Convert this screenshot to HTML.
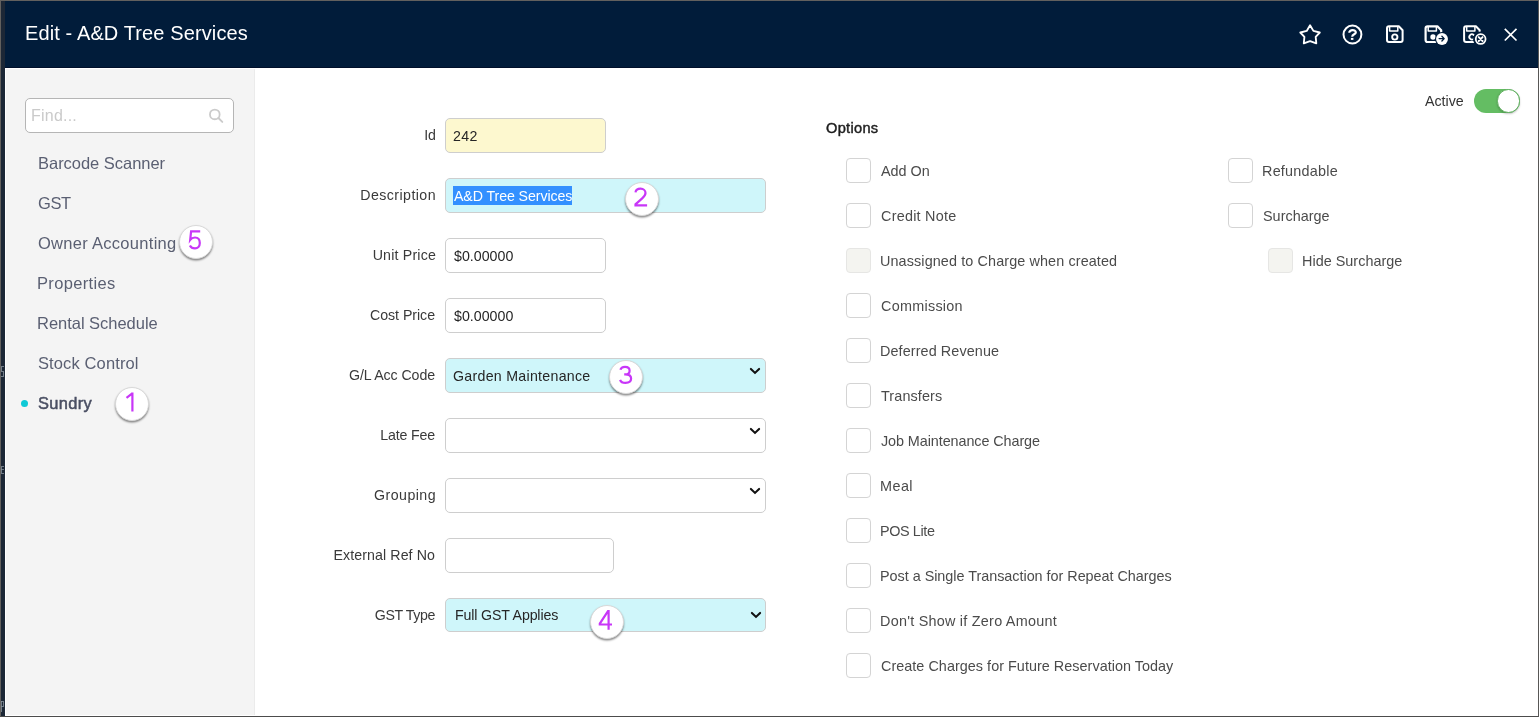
<!DOCTYPE html>
<html><head><meta charset="utf-8">
<style>
*{margin:0;padding:0;box-sizing:border-box}
html,body{width:1539px;height:717px;overflow:hidden;background:#5f5d5b;font-family:"Liberation Sans",sans-serif}
.a,.t,.badge,svg{position:absolute}
.t{white-space:nowrap;will-change:transform}
.badge{border-radius:50%;background:#fff;border:1px solid #d9d9d9;box-shadow:0 1.5px 2px rgba(0,0,0,.45)}
</style></head>
<body>
<div class="a" style="left:0px;top:0px;width:1539px;height:717px;background:#62605e"></div>
<div class="a" style="left:1px;top:1px;width:4px;height:715px;background:#1c2736"></div>
<div class="a" style="left:5px;top:1px;width:1533px;height:715px;background:#fff"></div>
<div class="a" style="left:0px;top:716px;width:1539px;height:1px;background:#4c4c4c"></div>
<div class="a" style="left:1538px;top:1px;width:1px;height:716px;background:#585756"></div>
<div class="a" style="left:1px;top:366px;width:3px;height:1px;background:#8d99a3;opacity:.75"></div>
<div class="a" style="left:1px;top:367px;width:1px;height:4px;background:#8d99a3;opacity:.75"></div>
<div class="a" style="left:1px;top:371px;width:3px;height:1px;background:#8d99a3;opacity:.75"></div>
<div class="a" style="left:3px;top:372px;width:1px;height:4px;background:#8d99a3;opacity:.75"></div>
<div class="a" style="left:1px;top:376px;width:3px;height:1px;background:#8d99a3;opacity:.75"></div>
<div class="a" style="left:1px;top:466px;width:3px;height:1px;background:#8d99a3;opacity:.75"></div>
<div class="a" style="left:1px;top:467px;width:1px;height:6px;background:#8d99a3;opacity:.75"></div>
<div class="a" style="left:1px;top:469px;width:3px;height:1px;background:#8d99a3;opacity:.75"></div>
<div class="a" style="left:1px;top:473px;width:3px;height:1px;background:#8d99a3;opacity:.75"></div>
<div class="a" style="left:1px;top:701px;width:1px;height:11px;background:#8d99a3;opacity:.75"></div>
<div class="a" style="left:1px;top:701px;width:3px;height:1px;background:#8d99a3;opacity:.75"></div>
<div class="a" style="left:3px;top:702px;width:1px;height:4px;background:#8d99a3;opacity:.75"></div>
<div class="a" style="left:1px;top:706px;width:3px;height:1px;background:#8d99a3;opacity:.75"></div>
<div class="a" style="left:5px;top:1px;width:1533px;height:66px;background:#011c3a"></div>
<div class="a" style="left:5px;top:67px;width:1533px;height:1px;background:#000f2a"></div>
<div class="t" style="left:25.40px;top:19.67px;font-size:20.000px;line-height:26px;color:#fff;letter-spacing:0.117px;">Edit - A&amp;D Tree Services</div>
<div class="a" style="left:6px;top:69px;width:248px;height:646px;background:#f4f4f4"></div>
<div class="a" style="left:254px;top:69px;width:1px;height:646px;background:#ebebeb"></div>
<div class="a" style="left:25px;top:98px;width:209px;height:35px;background:#fff;border:1px solid #b5b5b5;border-radius:5px"></div>
<div class="t" style="left:30.72px;top:104.95px;font-size:16.000px;line-height:21px;color:#cacaca;letter-spacing:0.220px;">Find...</div>
<svg style="left:205px;top:105px" width="22" height="22" viewBox="0 0 22 22"><circle cx="9.8" cy="9.4" r="4.85" fill="none" stroke="#cbcbcb" stroke-width="1.8"/><line x1="13.4" y1="13" x2="17.3" y2="16.9" stroke="#cbcbcb" stroke-width="1.9" stroke-linecap="round"/></svg>
<div class="t" style="left:37.68px;top:153.28px;font-size:16.500px;line-height:21px;color:#5a5f72;letter-spacing:-0.028px;">Barcode Scanner</div>
<div class="t" style="left:37.97px;top:193.28px;font-size:16.500px;line-height:21px;color:#5a5f72;letter-spacing:-0.450px;">GST</div>
<div class="t" style="left:37.86px;top:233.28px;font-size:16.500px;line-height:21px;color:#5a5f72;letter-spacing:0.288px;">Owner Accounting</div>
<div class="t" style="left:37.08px;top:273.28px;font-size:16.500px;line-height:21px;color:#5a5f72;letter-spacing:0.340px;">Properties</div>
<div class="t" style="left:37.08px;top:313.28px;font-size:16.500px;line-height:21px;color:#5a5f72;letter-spacing:-0.026px;">Rental Schedule</div>
<div class="t" style="left:37.66px;top:353.28px;font-size:16.500px;line-height:21px;color:#5a5f72;letter-spacing:0.118px;">Stock Control</div>
<div class="t" style="left:38.06px;top:393.31px;font-size:16.400px;line-height:21px;color:#4a4f63;-webkit-text-stroke:0.5px #4a4f63;letter-spacing:0.35px;">Sundry</div>
<div class="a" style="left:20.5px;top:399.5px;width:7px;height:7px;background:#0ec9d6;border-radius:50%"></div>
<div class="badge" style="left:178.5px;top:224.6px;width:34px;height:34px;"></div>
<div class="badge" style="left:114.5px;top:386.6px;width:34px;height:34px;"></div>
<div class="t" style="left:35.61px;width:400px;text-align:right;top:125.98px;font-size:14.200px;line-height:18px;color:#3a3a3a;">Id</div>
<div class="a" style="left:445px;top:118px;width:161px;height:35px;background:#fdf8cf;border:1px solid #cecece;border-radius:5px"></div>
<div class="t" style="left:453.09px;top:126.88px;font-size:14.200px;line-height:18px;color:#262626;letter-spacing:0.389px;">242</div>
<div class="t" style="left:36.09px;width:400px;text-align:right;top:185.98px;font-size:14.200px;line-height:18px;color:#3a3a3a;letter-spacing:0.436px;">Description</div>
<div class="a" style="left:445px;top:178px;width:321px;height:35px;background:#cff6fa;border:1px solid #cecece;border-radius:5px"></div>
<div class="a" style="left:453px;top:186px;width:119px;height:19px;background:#3390ff"></div>
<div class="t" style="left:453.50px;top:187.28px;font-size:14.200px;line-height:18px;color:#fff;letter-spacing:-0.093px;">A&amp;D Tree Services</div>
<div class="t" style="left:35.52px;width:400px;text-align:right;top:245.98px;font-size:14.200px;line-height:18px;color:#3a3a3a;letter-spacing:0.183px;">Unit Price</div>
<div class="a" style="left:445px;top:238px;width:161px;height:35px;background:#fff;border:1px solid #cecece;border-radius:5px"></div>
<div class="t" style="left:453.66px;top:246.98px;font-size:14.200px;line-height:18px;color:#262626;letter-spacing:0.018px;">$0.00000</div>
<div class="t" style="left:35.33px;width:400px;text-align:right;top:305.98px;font-size:14.200px;line-height:18px;color:#3a3a3a;letter-spacing:-0.046px;">Cost Price</div>
<div class="a" style="left:445px;top:298px;width:161px;height:35px;background:#fff;border:1px solid #cecece;border-radius:5px"></div>
<div class="t" style="left:453.66px;top:306.98px;font-size:14.200px;line-height:18px;color:#262626;letter-spacing:0.018px;">$0.00000</div>
<div class="t" style="left:35.29px;width:400px;text-align:right;top:365.98px;font-size:14.200px;line-height:18px;color:#3a3a3a;letter-spacing:-0.091px;">G/L Acc Code</div>
<div class="a" style="left:445px;top:358px;width:321px;height:35px;background:#cff6fa;border:1px solid #cecece;border-radius:5px"></div>
<div class="t" style="left:453.09px;top:367.38px;font-size:14.200px;line-height:18px;color:#262626;letter-spacing:0.278px;">Garden Maintenance</div>
<svg style="left:748px;top:367px" width="14" height="9" viewBox="0 0 14 9"><polyline points="2.9,1.9 7,5.9 11.1,1.9" fill="none" stroke="#111" stroke-width="2.1" stroke-linecap="round" stroke-linejoin="miter"/></svg>
<div class="t" style="left:35.21px;width:400px;text-align:right;top:425.98px;font-size:14.200px;line-height:18px;color:#3a3a3a;letter-spacing:-0.163px;">Late Fee</div>
<div class="a" style="left:445px;top:418px;width:321px;height:35px;background:#fff;border:1px solid #cecece;border-radius:5px"></div>
<svg style="left:748px;top:427px" width="14" height="9" viewBox="0 0 14 9"><polyline points="2.9,1.9 7,5.9 11.1,1.9" fill="none" stroke="#111" stroke-width="2.1" stroke-linecap="round" stroke-linejoin="miter"/></svg>
<div class="t" style="left:36.05px;width:400px;text-align:right;top:485.98px;font-size:14.200px;line-height:18px;color:#3a3a3a;letter-spacing:0.443px;">Grouping</div>
<div class="a" style="left:445px;top:478px;width:321px;height:35px;background:#fff;border:1px solid #cecece;border-radius:5px"></div>
<svg style="left:748px;top:487px" width="14" height="9" viewBox="0 0 14 9"><polyline points="2.9,1.9 7,5.9 11.1,1.9" fill="none" stroke="#111" stroke-width="2.1" stroke-linecap="round" stroke-linejoin="miter"/></svg>
<div class="t" style="left:35.34px;width:400px;text-align:right;top:545.98px;font-size:14.200px;line-height:18px;color:#3a3a3a;letter-spacing:0.089px;">External Ref No</div>
<div class="a" style="left:445px;top:538px;width:169px;height:35px;background:#fff;border:1px solid #cecece;border-radius:5px"></div>
<div class="t" style="left:34.95px;width:400px;text-align:right;top:605.98px;font-size:14.200px;line-height:18px;color:#3a3a3a;letter-spacing:-0.393px;">GST Type</div>
<div class="a" style="left:445px;top:598px;width:321px;height:34px;background:#cff6fa;border:1px solid #cecece;border-radius:5px"></div>
<div class="t" style="left:455.16px;top:605.68px;font-size:14.200px;line-height:18px;color:#262626;letter-spacing:-0.145px;">Full GST Applies</div>
<svg style="left:748.8px;top:611px" width="14" height="9" viewBox="0 0 14 9"><polyline points="2.9,1.9 7,5.9 11.1,1.9" fill="none" stroke="#111" stroke-width="2.1" stroke-linecap="round" stroke-linejoin="miter"/></svg>
<div class="badge" style="left:624.5px;top:181.6px;width:34px;height:34px;"></div>
<div class="badge" style="left:609.4px;top:359.6px;width:34px;height:34px;"></div>
<div class="badge" style="left:589.5px;top:604.6px;width:34px;height:34px;"></div>
<div class="t" style="left:825.84px;top:118.94px;font-size:14.600px;line-height:19px;color:#1e1e1e;-webkit-text-stroke:0.45px #1e1e1e;letter-spacing:0.3px;">Options</div>
<div class="a" style="left:846px;top:158px;width:25px;height:25px;background:#fff;border:1px solid #d4d4d4;border-radius:4px"></div>
<div class="t" style="left:881.40px;top:161.51px;font-size:14.400px;line-height:19px;color:#4b4b4b;letter-spacing:0.004px;">Add On</div>
<div class="a" style="left:846px;top:203px;width:25px;height:25px;background:#fff;border:1px solid #d4d4d4;border-radius:4px"></div>
<div class="t" style="left:880.68px;top:206.51px;font-size:14.400px;line-height:19px;color:#4b4b4b;letter-spacing:0.238px;">Credit Note</div>
<div class="a" style="left:846px;top:248px;width:25px;height:25px;background:#f4f4f0;border:1px solid #e6e6e4;border-radius:4px"></div>
<div class="t" style="left:880.32px;top:251.51px;font-size:14.400px;line-height:19px;color:#4b4b4b;letter-spacing:0.109px;">Unassigned to Charge when created</div>
<div class="a" style="left:846px;top:293px;width:25px;height:25px;background:#fff;border:1px solid #d4d4d4;border-radius:4px"></div>
<div class="t" style="left:880.68px;top:296.51px;font-size:14.400px;line-height:19px;color:#4b4b4b;letter-spacing:0.273px;">Commission</div>
<div class="a" style="left:846px;top:338px;width:25px;height:25px;background:#fff;border:1px solid #d4d4d4;border-radius:4px"></div>
<div class="t" style="left:880.25px;top:341.51px;font-size:14.400px;line-height:19px;color:#4b4b4b;letter-spacing:0.097px;">Deferred Revenue</div>
<div class="a" style="left:846px;top:383px;width:25px;height:25px;background:#fff;border:1px solid #d4d4d4;border-radius:4px"></div>
<div class="t" style="left:881.11px;top:386.51px;font-size:14.400px;line-height:19px;color:#4b4b4b;letter-spacing:0.116px;">Transfers</div>
<div class="a" style="left:846px;top:428px;width:25px;height:25px;background:#fff;border:1px solid #d4d4d4;border-radius:4px"></div>
<div class="t" style="left:881.18px;top:431.51px;font-size:14.400px;line-height:19px;color:#4b4b4b;letter-spacing:-0.084px;">Job Maintenance Charge</div>
<div class="a" style="left:846px;top:473px;width:25px;height:25px;background:#fff;border:1px solid #d4d4d4;border-radius:4px"></div>
<div class="t" style="left:880.25px;top:476.51px;font-size:14.400px;line-height:19px;color:#4b4b4b;letter-spacing:0.450px;">Meal</div>
<div class="a" style="left:846px;top:518px;width:25px;height:25px;background:#fff;border:1px solid #d4d4d4;border-radius:4px"></div>
<div class="t" style="left:880.25px;top:521.51px;font-size:14.400px;line-height:19px;color:#4b4b4b;letter-spacing:-0.386px;">POS Lite</div>
<div class="a" style="left:846px;top:563px;width:25px;height:25px;background:#fff;border:1px solid #d4d4d4;border-radius:4px"></div>
<div class="t" style="left:880.25px;top:566.51px;font-size:14.400px;line-height:19px;color:#4b4b4b;letter-spacing:-0.024px;">Post a Single Transaction for Repeat Charges</div>
<div class="a" style="left:846px;top:608px;width:25px;height:25px;background:#fff;border:1px solid #d4d4d4;border-radius:4px"></div>
<div class="t" style="left:880.25px;top:611.51px;font-size:14.400px;line-height:19px;color:#4b4b4b;letter-spacing:0.248px;">Don&#x27;t Show if Zero Amount</div>
<div class="a" style="left:846px;top:653px;width:25px;height:25px;background:#fff;border:1px solid #d4d4d4;border-radius:4px"></div>
<div class="t" style="left:880.68px;top:656.51px;font-size:14.400px;line-height:19px;color:#4b4b4b;letter-spacing:0.034px;">Create Charges for Future Reservation Today</div>
<div class="a" style="left:1228px;top:158px;width:25px;height:25px;background:#fff;border:1px solid #d4d4d4;border-radius:4px"></div>
<div class="t" style="left:1262.35px;top:161.51px;font-size:14.400px;line-height:19px;color:#4b4b4b;letter-spacing:0.238px;">Refundable</div>
<div class="a" style="left:1228px;top:203px;width:25px;height:25px;background:#fff;border:1px solid #d4d4d4;border-radius:4px"></div>
<div class="t" style="left:1262.85px;top:206.51px;font-size:14.400px;line-height:19px;color:#4b4b4b;letter-spacing:0.017px;">Surcharge</div>
<div class="a" style="left:1268px;top:248px;width:25px;height:25px;background:#f4f4f0;border:1px solid #e6e6e4;border-radius:4px"></div>
<div class="t" style="left:1302.35px;top:251.51px;font-size:14.400px;line-height:19px;color:#4b4b4b;letter-spacing:0.022px;">Hide Surcharge</div>
<div class="t" style="left:1425.10px;top:92.08px;font-size:14.200px;line-height:18px;color:#333;letter-spacing:0.023px;">Active</div>
<div class="a" style="left:1474px;top:89px;width:46px;height:24px;background:#64bd63;border-radius:12px"></div>
<div class="a" style="left:1496.5px;top:89.2px;width:23.6px;height:23.6px;background:#fff;border-radius:50%;border:1px solid #5fb05e;box-shadow:0 1px 2px rgba(0,0,0,.22)"></div>
<svg style="left:0;top:0" width="1539" height="70" viewBox="0 0 1539 70"><polygon points="1310.06,25.3 1313.4,30.9 1319.8,32.5 1315.7,36.8 1316.3,43.4 1310.06,41.1 1303.8,43.4 1304.4,36.8 1300.3,32.5 1306.7,30.9" fill="none" stroke="#fff" stroke-linejoin="round" stroke-linecap="round" stroke-width="1.85"/><circle cx="1352.45" cy="34.55" r="8.95" fill="none" stroke="#fff" stroke-linejoin="round" stroke-linecap="round" stroke-width="2"/><path d="M1349.3,32.7 C1349.1,29.3 1355.9,29.2 1355.8,32.5 C1355.7,34.4 1352.2,34.2 1352.2,36.8" fill="none" stroke="#fff" stroke-width="2.2" stroke-linecap="butt" stroke-linejoin="round"/><rect x="1350.9" y="37.9" width="2.5" height="2" fill="#fff"/><path d="M1387.0,28.3 a2,2 0 0 1 2,-2 h9.8 L1402.6,30.2 V40 a2,2 0 0 1 -2,2 H1389.0 a2,2 0 0 1 -2,-2 Z" fill="none" stroke="#fff" stroke-linejoin="round" stroke-linecap="round" stroke-width="2"/><path d="M1389.6,26.8 V31.1 H1397.8 V26.8" fill="none" stroke="#fff" stroke-linejoin="round" stroke-linecap="round" stroke-width="1.5"/><circle cx="1394.8" cy="37" r="2.65" fill="none" stroke="#fff" stroke-linejoin="round" stroke-linecap="round" stroke-width="1.9"/><path d="M1425.6,28.3 a2,2 0 0 1 2,-2 h9.8 L1441.1999999999998,30.2 V40 a2,2 0 0 1 -2,2 H1427.6 a2,2 0 0 1 -2,-2 Z" fill="none" stroke="#fff" stroke-linejoin="round" stroke-linecap="round" stroke-width="2.2"/><path d="M1428.1999999999998,26.8 V31.1 H1436.3999999999999 V26.8" fill="none" stroke="#fff" stroke-linejoin="round" stroke-linecap="round" stroke-width="1.5"/><circle cx="1433" cy="37" r="2.7" fill="#fff"/><circle cx="1442" cy="39" r="6.9" fill="#011c3a"/><circle cx="1442" cy="39" r="5.95" fill="#fff"/><path d="M1439.1,38.6 H1444 M1441.9,36.2 L1444.2,38.6 L1441.9,41" fill="none" stroke="#011c3a" stroke-width="1.3" stroke-linecap="round" stroke-linejoin="round"/><path d="M1464.1,28.3 a2,2 0 0 1 2,-2 h9.8 L1479.6999999999998,30.2 V40 a2,2 0 0 1 -2,2 H1466.1 a2,2 0 0 1 -2,-2 Z" fill="none" stroke="#fff" stroke-linejoin="round" stroke-linecap="round" stroke-width="2"/><path d="M1466.6999999999998,26.8 V31.1 H1474.8999999999999 V26.8" fill="none" stroke="#fff" stroke-linejoin="round" stroke-linecap="round" stroke-width="1.5"/><path d="M1473.7,35.0 A2.6,2.6 0 1 0 1473.7,38.8" fill="none" stroke="#fff" stroke-linejoin="round" stroke-linecap="round" stroke-width="1.8"/><circle cx="1480.65" cy="39.05" r="7.6" fill="#011c3a"/><circle cx="1480.65" cy="39.05" r="4.9" fill="none" stroke="#fff" stroke-linejoin="round" stroke-linecap="round" stroke-width="1.8"/><path d="M1478.7,37.1 L1482.6,41 M1482.6,37.1 L1478.7,41" stroke="#fff" stroke-width="1.9" stroke-linecap="round"/><path d="M1504.8,28.8 L1516.5,40.5 M1516.5,28.8 L1504.8,40.5" stroke="#fff" stroke-width="1.7" stroke-linecap="butt"/></svg>
<svg style="left:0;top:0" width="1539" height="717" viewBox="0 0 1539 717"><path d="M132.4,392.6 V411.6 M132.6,393.2 L126.5,397.8" fill="none" stroke="#c836f8" stroke-width="2.2" stroke-linecap="butt" stroke-linejoin="miter"/><path d="M200.2,231.3 H191.1 L190.2,239.8 C191.3,238.3 193,237.5 195,237.5 C198,237.5 199.8,239.7 199.8,242.9 C199.8,246.3 197.7,248.3 195,248.3 C192.6,248.3 190.8,247.2 189.9,245.4" fill="none" stroke="#c836f8" stroke-width="2.2" stroke-linecap="butt" stroke-linejoin="miter" stroke-linejoin="round"/><path d="M635.5,192.4 C635.8,190 637.8,188.7 640.6,188.7 C643.5,188.7 645.5,190.6 645.5,193.1 C645.5,195.3 644.2,196.6 642.2,198.4 L635.5,204.3 V205.3 H647.1" fill="none" stroke="#c836f8" stroke-width="2.2" stroke-linecap="butt" stroke-linejoin="miter"/><path d="M620.4,369.8 C620.9,367.9 622.6,366.8 625,366.8 C627.8,366.8 629.6,368.5 629.6,370.7 C629.6,373 627.8,374.4 625.2,374.4 H624.2 M625.2,374.4 C628.8,374.4 631.1,376.1 631.1,378.6 C631.1,381.2 628.8,382.9 625.5,382.9 C622.6,382.9 620.7,381.6 620.1,379.8" fill="none" stroke="#c836f8" stroke-width="2.2" stroke-linecap="butt" stroke-linejoin="miter"/><path d="M608.6,629.8 V611.2 H608 L599.8,623.6 V624.5 H612" fill="none" stroke="#c836f8" stroke-width="2.2" stroke-linecap="butt" stroke-linejoin="miter" stroke-width="2.2"/></svg>
</body></html>
